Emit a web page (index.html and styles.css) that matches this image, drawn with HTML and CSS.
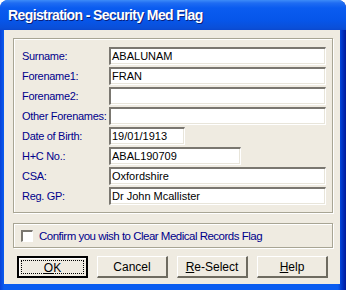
FILE: index.html
```html
<!DOCTYPE html>
<html lang="en">
<head>
  <meta charset="UTF-8">
  <meta name="viewport" content="width=device-width, initial-scale=1.0">
  <title>Registration - Security Med Flag</title>
  <link rel="stylesheet" href="styles.css">
</head>
<body>

  <div class="window">
    <div class="title-bar">Registration - Security Med Flag</div>

    <div class="client">
      <!-- Patient details -->
      <div class="group details">
        <label>Surname:</label>
        <div class="field">ABALUNAM</div>

        <label>Forename1:</label>
        <div class="field">FRAN</div>

        <label>Forename2:</label>
        <div class="field"></div>

        <label>Other Forenames:</label>
        <div class="field"></div>

        <label>Date of Birth:</label>
        <div class="field short">19/01/1913</div>

        <label>H+C No.:</label>
        <div class="field medium">ABAL190709</div>

        <label>CSA:</label>
        <div class="field">Oxfordshire</div>

        <label>Reg. GP:</label>
        <div class="field">Dr John Mcallister</div>
      </div>

      <!-- Confirmation -->
      <div class="group confirm">
        <span class="checkbox"></span>
        <span class="confirm-text">Confirm you wish to Clear Medical Records Flag</span>
      </div>

      <div class="buttons">
        <button class="btn default"><span class="focus"><u>O</u>K</span></button>
        <button class="btn">Cancel</button>
        <button class="btn"><u>R</u>e-Select</button>
        <button class="btn"><u>H</u>elp</button>
      </div>
    </div>
  </div>

</body>
</html>
```

FILE: styles.css
```css
/* Window frame */
body {
  margin: 0;
  background: #fff;
}

.window {
  width: 346px;
  height: 290px;
  box-sizing: border-box;
  padding: 0 6px 6px 4px;
  border-radius: 8px 8px 0 0;
  background: linear-gradient(to right, #0841d8 0, #0a5cf0 4px, #0a5cf0 338px, #0036c8 342px, #001a9a 346px);
  display: flex;
  flex-direction: column;
}

.title-bar {
  height: 30px;
  margin: 0 -6px 0 -4px;
  padding-left: 8px;
  border-radius: 8px 8px 0 0;
  background: linear-gradient(to bottom, #3d8cf8 0, #1f6cf2 3px, #0a5cf0 8px, #0656ea 20px, #0a4fd8 28px, #0a48d0 30px);
  color: #fff;
  font-family: "Liberation Sans", Arial, sans-serif;
  font-weight: bold;
  font-size: 14px;
  letter-spacing: -0.6px;
  line-height: 31px;
  text-shadow: 1px 1px 0 #0a1e78;
  box-sizing: border-box;
}

.client {
  flex: 1;
  background: #efebe1;
  padding: 8px 7px 0 9px;
  font-family: "Liberation Sans", Arial, sans-serif;
  font-size: 11px;
}

/* Group boxes */
.group {
  box-sizing: border-box;
  border: 1px solid #a8a594;
  box-shadow: inset 1px 1px 0 #fff, 1px 1px 0 #fff;
  width: 320px;
}

.details {
  display: grid;
  grid-template-columns: 87px 217px;
  grid-auto-rows: 18px;
  row-gap: 2px;
  align-items: center;
  padding: 8px 0 0 8px;
  height: 175px;
}

.details label {
  color: #00008b;
  white-space: nowrap;
  letter-spacing: -0.3px;
}

/* Sunken text boxes */
.field {
  height: 18px;
  box-sizing: border-box;
  border-style: solid;
  border-width: 2px 1px 1px 2px;
  border-color: #7a7770 #fff #fff #7a7770;
  box-shadow: inset -1px -1px 0 #e8e5da;
  background: #fff;
  color: #000;
  padding-left: 1px;
  line-height: 15px;
}

.field.short {
  width: 76px;
}

.field.medium {
  width: 132px;
}

.confirm {
  margin-top: 10px;
  height: 25px;
  display: flex;
  align-items: center;
  padding-left: 7px;
}

.checkbox {
  width: 12px;
  height: 12px;
  box-sizing: border-box;
  border-style: solid;
  border-width: 2px 1px 1px 2px;
  border-color: #7a7770 #fff #fff #7a7770;
  background: #fff;
  margin-right: 6px;
}

.confirm-text {
  color: #00008b;
  font-size: 11.5px;
  letter-spacing: -0.5px;
}

/* Buttons */
.buttons {
  display: flex;
  gap: 9px;
  margin-top: 8px;
  padding-left: 4px;
}

.btn {
  width: 71px;
  height: 22px;
  box-sizing: border-box;
  background: #efebe1;
  border-style: solid;
  border-width: 1px 2px 2px 1px;
  border-color: #fff #6e6b60 #6e6b60 #fff;
  font-family: "Liberation Sans", Arial, sans-serif;
  font-size: 12px;
  color: #000;
  padding: 0;
}

.btn.default {
  border: 2px solid #000;
  box-shadow: inset 1px 1px 0 #fff;
  padding: 2px;
}

.btn .focus {
  display: block;
  height: 100%;
  box-sizing: border-box;
  border: 1px dotted #000;
  line-height: 14px;
}
```
